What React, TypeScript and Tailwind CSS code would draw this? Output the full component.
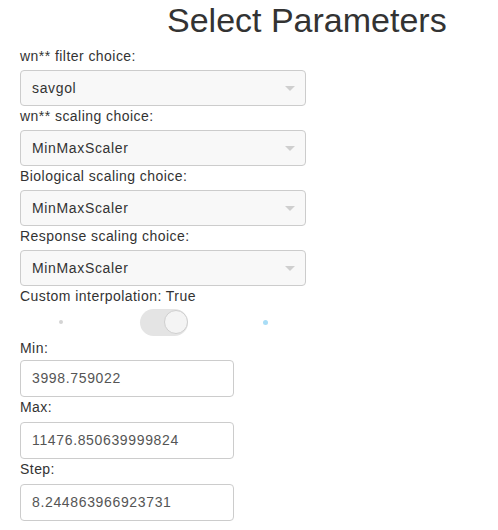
import React from "react";

const selects = [
  { label: "wn** filter choice:", value: "savgol" },
  { label: "wn** scaling choice:", value: "MinMaxScaler" },
  { label: "Biological scaling choice:", value: "MinMaxScaler" },
  { label: "Response scaling choice:", value: "MinMaxScaler" },
];

const numbers = [
  { label: "Min:", value: "3998.759022", mb: "mb-[2px]" },
  { label: "Max:", value: "11476.850639999824", mb: "mb-[5px]" },
  { label: "Step:", value: "8.244863966923731", mb: "mb-[5px]" },
];

const SelectBox = ({ value }: { value: string }) => (
  <div className="flex h-[36px] w-[286px] items-center justify-between rounded-[4px] border border-[#cccccc] bg-[#f8f8f8] pl-[11px] pr-[10px] text-[14px] tracking-[0.65px] text-[#333333]">
    <span>{value}</span>
    <span className="h-0 w-0 border-x-[5px] border-t-[5px] border-x-transparent border-t-[#cfcfcf]" />
  </div>
);

export default function App() {
  return (
    <div
      className="h-[530px] w-[498px] overflow-hidden bg-white text-[#333333]"
      style={{ fontFamily: '"Liberation Sans", Arial, sans-serif' }}
    >
      {/* TITLE */}
      <h2 className="h-[40px] pl-[167px] text-[34px] leading-[40px] font-normal text-[#333333]">
        Select Parameters
      </h2>

      <div className="mt-[6px] pl-[20px]">
        {/* SELECTS */}
        {selects.map((s) => (
          <div key={s.label}>
            <div className="mb-[4px] h-[20px] text-[14px] leading-[20px] tracking-[0.45px]">{s.label}</div>
            <SelectBox value={s.value} />
          </div>
        ))}

        {/* SWITCH */}
        <div className="h-[20px] text-[14px] leading-[20px] tracking-[0.45px]">Custom interpolation: True</div>
        <div className="flex h-[32px] w-[286px] items-center">
          <div className="ml-[39px] h-[4px] w-[4px] rounded-full bg-[#d4d4d4]" />
          <div className="ml-[77px] flex h-[27px] w-[48px] items-center justify-end rounded-full bg-[#e4e4e4]">
            <div className="h-[24px] w-[24px] rounded-full border border-[#cfcfcf] bg-[#f4f4f4]" />
          </div>
          <div className="ml-[75px] h-[5px] w-[5px] rounded-full bg-[#a9ddf6]" />
        </div>

        {/* NUMERIC INPUTS */}
        {numbers.map((n) => (
          <div key={n.label}>
            <div className={`h-[20px] text-[14px] leading-[20px] tracking-[0.45px] ${n.mb}`}>{n.label}</div>
            <div className="flex h-[37px] w-[214px] items-center rounded-[4px] border border-[#cccccc] bg-white pl-[11px] text-[14px] tracking-[0.65px] text-[#555555]">
              {n.value}
            </div>
          </div>
        ))}
      </div>
    </div>
  );
}
